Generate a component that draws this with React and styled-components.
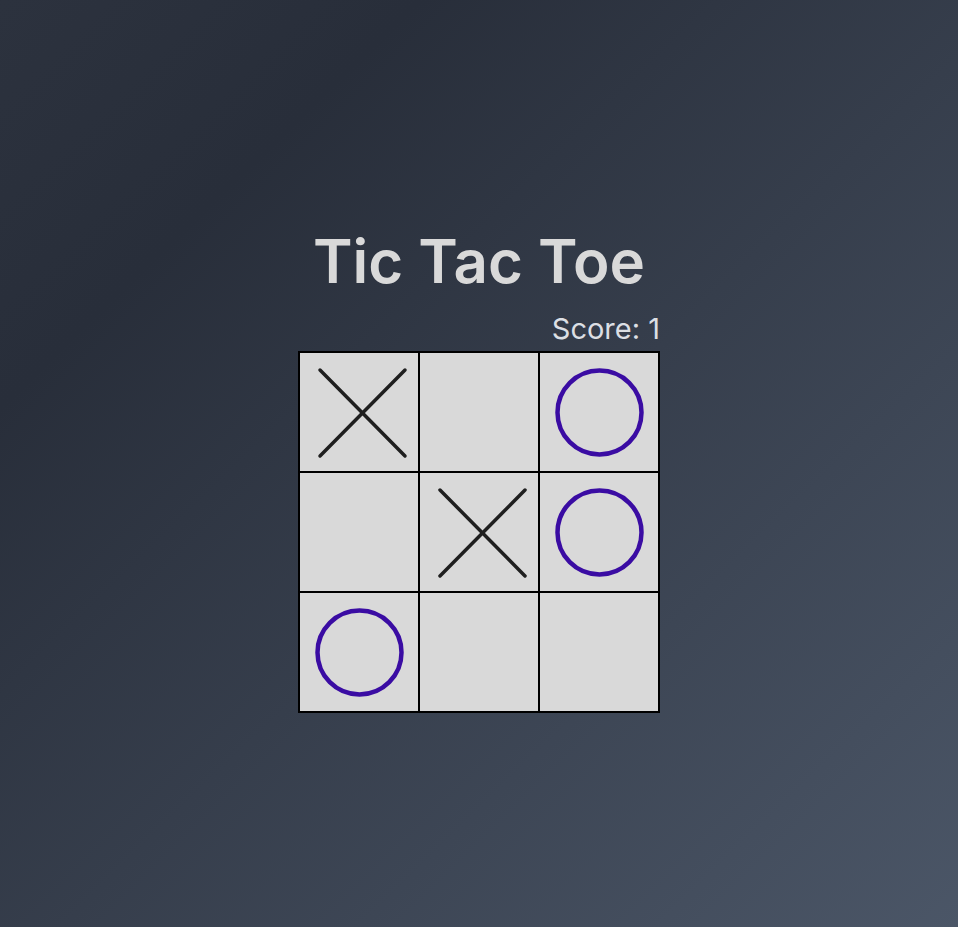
import React from "react";
import styled, { createGlobalStyle } from "styled-components";

const board = ["X", "", "O", "", "X", "O", "O", "", ""];

export default function App() {
  return (
    <>
      <GlobalStyle />
      <Page>
        <Title>Tic Tac Toe</Title>
        <Score>Score: 1</Score>
        <Board>
          {board.map((mark, i) => (
            <Cell key={i}>
              {mark === "X" && <Cross />}
              {mark === "O" && <Circle />}
            </Cell>
          ))}
        </Board>
      </Page>
    </>
  );
}

function Cross() {
  return (
    <Mark viewBox="0 0 118 118">
      <line x1="20" y1="17" x2="105" y2="103" stroke="#1f1f1f" strokeWidth="3.5" strokeLinecap="round" />
      <line x1="105" y1="17" x2="20" y2="103" stroke="#1f1f1f" strokeWidth="3.5" strokeLinecap="round" />
    </Mark>
  );
}

function Circle() {
  return (
    <Mark viewBox="0 0 118 118">
      <circle cx="59.5" cy="59.5" r="42" fill="none" stroke="#3a0ca3" strokeWidth="4.5" />
    </Mark>
  );
}

const GlobalStyle = createGlobalStyle`
  * { box-sizing: border-box; }
  body {
    margin: 0;
    font-family: Inter, "Noto Sans", sans-serif;
  }
`;

const Page = styled.div`
  min-height: 100vh;
  display: flex;
  flex-direction: column;
  align-items: center;
  justify-content: center;
  background: linear-gradient(to bottom right, #2c323e 0%, #282e3a 22%, #4b5667 100%);
`;

const Title = styled.h1`
  margin: 17px 0 0;
  font-size: 60px;
  font-weight: 600;
  line-height: 1;
  color: #d9d9d9;
`;

const Score = styled.div`
  width: 362px;
  margin: 23px 0 8px;
  text-align: right;
  font-size: 29px;
  font-weight: 400;
  line-height: 1;
  color: #dcdfe4;
`;

const Board = styled.div`
  display: grid;
  grid-template-columns: repeat(3, 120px);
  grid-template-rows: repeat(3, 120px);
  border: 1px solid #000;
`;

const Cell = styled.div`
  border: 1px solid #000;
  background: #d9d9d9;
`;

const Mark = styled.svg`
  display: block;
  width: 118px;
  height: 118px;
`;
